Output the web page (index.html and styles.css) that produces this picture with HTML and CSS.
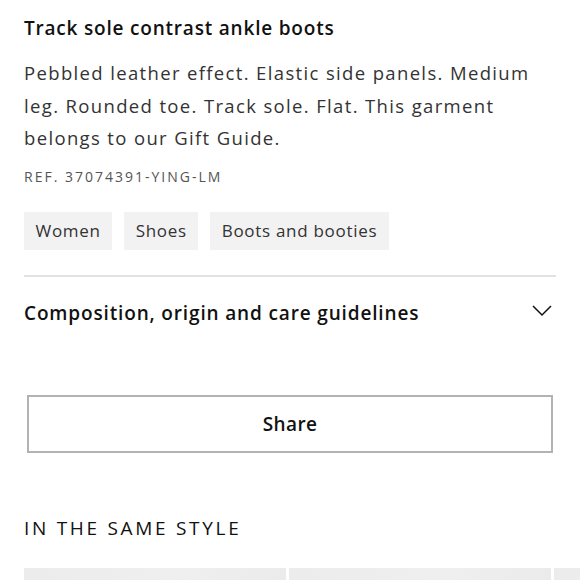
FILE: index.html
```html
<!DOCTYPE html>
<html lang="en">
<head>
<meta charset="utf-8">
<title>Track sole contrast ankle boots</title>
<link rel="stylesheet" href="styles.css">
</head>
<body>
<main class="page">
  <h1 class="title">Track sole contrast ankle boots</h1>
  <p class="desc">Pebbled leather effect. Elastic side panels. Medium leg. Rounded toe. Track sole. Flat. This garment belongs to our Gift Guide.</p>
  <p class="ref">REF. 37074391-YING-LM</p>
  <ul class="tags">
    <li class="tag">Women</li>
    <li class="tag">Shoes</li>
    <li class="tag">Boots and booties</li>
  </ul>
  <div class="divider"></div>
  <div class="accordion">
    <span class="acc-label">Composition, origin and care guidelines</span>
    <svg class="chevron" width="20" height="12" viewBox="0 0 20 12" aria-hidden="true">
      <polyline points="1,1 10,10 19,1" fill="none" stroke="#111" stroke-width="1.5"/>
    </svg>
  </div>
  <button class="share">Share</button>
  <h2 class="section">IN THE SAME STYLE</h2>
  <div class="cards">
    <div class="card"></div>
    <div class="card"></div>
    <div class="card"></div>
  </div>
</main>
</body>
</html>
```
FILE: styles.css
```css
html, body {
  margin: 0;
  padding: 0;
  background: #fff;
}
body {
  font-family: "Open Sans", "Noto Sans", sans-serif;
  color: #111;
  overflow: hidden;
}
.page {
  padding: 14px 24px 0 24px;
  width: 580px;
  box-sizing: border-box;
  overflow: hidden;
}
.title {
  margin: 0;
  font-size: 19px;
  line-height: 28px;
  font-weight: 600;
  color: #111;
  letter-spacing: 0.8px;
}
.desc {
  margin: 15px 0 0 0;
  font-size: 18.5px;
  line-height: 32.5px;
  font-weight: 400;
  color: #333;
  letter-spacing: 1.35px;
}
.ref {
  margin: 13px 0 0 0;
  font-size: 14px;
  line-height: 18px;
  color: #555;
  letter-spacing: 2px;
}
.tags {
  list-style: none;
  margin: 26px 0 0 0;
  padding: 0;
  display: flex;
  gap: 12px;
}
.tag {
  background: #f2f2f2;
  height: 38px;
  padding: 0 11.5px;
  display: flex;
  align-items: center;
  font-size: 17px;
  color: #333;
  letter-spacing: 0.7px;
}
.divider {
  margin-top: 25px;
  height: 2px;
  background: #e2e2e2;
}
.accordion {
  display: flex;
  justify-content: space-between;
  align-items: center;
  height: 72px;
}
.acc-label {
  font-size: 19px;
  font-weight: 600;
  color: #111;
  letter-spacing: 0.85px;
}
.chevron {
  margin-right: 4px;
  margin-bottom: 4px;
}
.share {
  display: block;
  margin: 46px 3px 0 3px;
  width: calc(100% - 6px);
  height: 58px;
  background: #fff;
  border: 2px solid #b3b3b3;
  font-family: inherit;
  font-size: 19px;
  font-weight: 600;
  color: #111;
  letter-spacing: 0.4px;
}
.section {
  margin: 63px 0 0 0;
  font-size: 19px;
  line-height: 24px;
  font-weight: 400;
  letter-spacing: 2.7px;
  color: #111;
}
.cards {
  margin-top: 28px;
  display: grid;
  grid-template-columns: 262px 262px 262px;
  gap: 3px;
}
.card {
  height: 40px;
  background: linear-gradient(90deg, #ececec, #efefef 60%, #ebebeb);
}
```
